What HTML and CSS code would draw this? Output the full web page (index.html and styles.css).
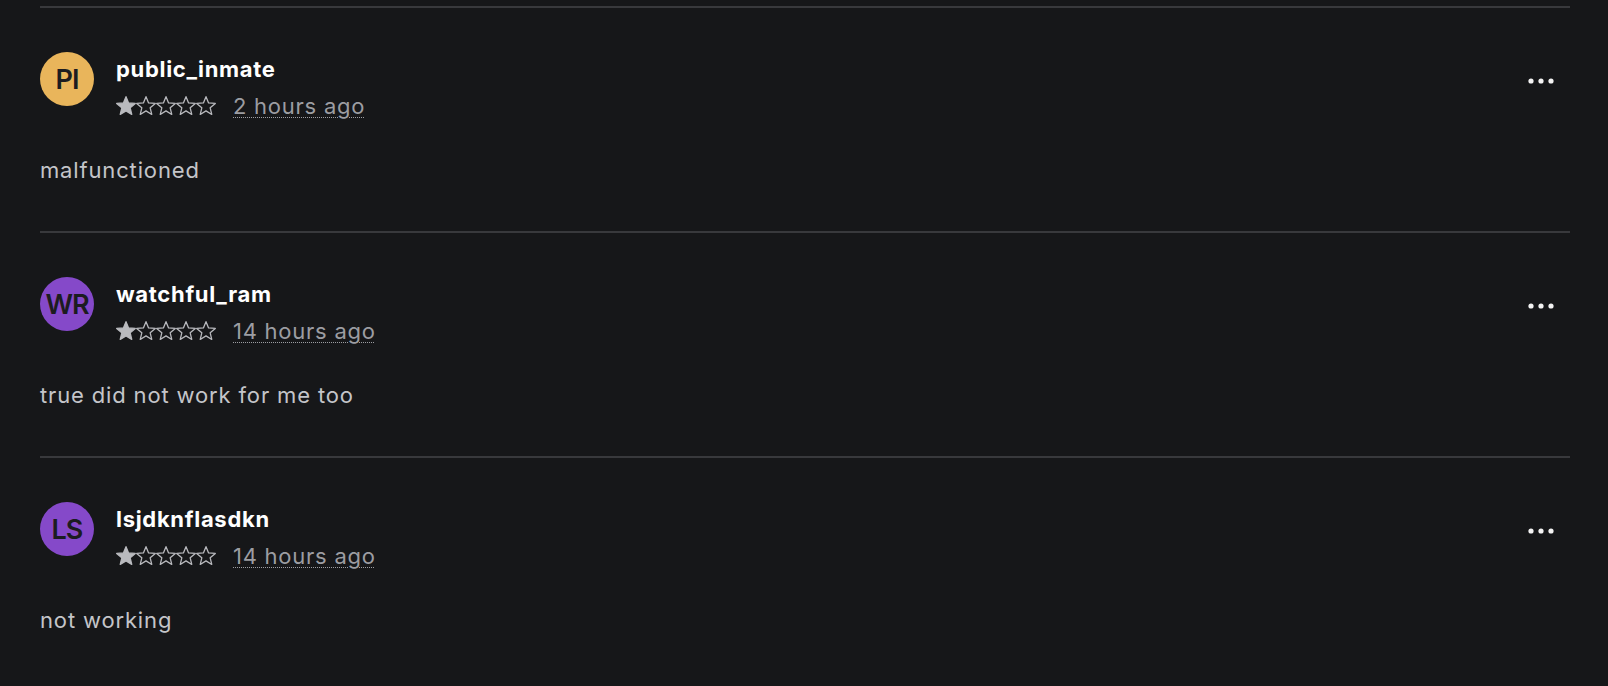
FILE: index.html
```html
<!DOCTYPE html>
<html lang="en">
<head>
    <meta charset="UTF-8">
    <meta name="viewport" content="width=device-width, initial-scale=1.0">
    <title>Reviews</title>
    <link rel="stylesheet" href="styles.css">
</head>
<body>
    <div class="review-list">

        <!-- Review 1 -->
        <div class="review">
            <div class="review-head">
                <div class="avatar avatar-yellow">PI</div>
                <div class="review-meta">
                    <div class="username">public_inmate</div>
                    <div class="meta-line">
                        <div class="stars">
                            <svg class="star filled" viewBox="0 0 20 20"><path d="M10 .7l2.59 6.24 6.73.53-5.14 4.39 1.58 6.57L10 14.9l-5.76 3.53 1.58-6.57L.68 7.47l6.73-.53z"/></svg>
                            <svg class="star" viewBox="0 0 20 20"><path d="M10 .7l2.59 6.24 6.73.53-5.14 4.39 1.58 6.57L10 14.9l-5.76 3.53 1.58-6.57L.68 7.47l6.73-.53z"/></svg>
                            <svg class="star" viewBox="0 0 20 20"><path d="M10 .7l2.59 6.24 6.73.53-5.14 4.39 1.58 6.57L10 14.9l-5.76 3.53 1.58-6.57L.68 7.47l6.73-.53z"/></svg>
                            <svg class="star" viewBox="0 0 20 20"><path d="M10 .7l2.59 6.24 6.73.53-5.14 4.39 1.58 6.57L10 14.9l-5.76 3.53 1.58-6.57L.68 7.47l6.73-.53z"/></svg>
                            <svg class="star" viewBox="0 0 20 20"><path d="M10 .7l2.59 6.24 6.73.53-5.14 4.39 1.58 6.57L10 14.9l-5.76 3.53 1.58-6.57L.68 7.47l6.73-.53z"/></svg>
                        </div>
                        <span class="time">2 hours ago</span>
                    </div>
                </div>
                <button class="more" aria-label="More">
                    <svg viewBox="0 0 30 10"><circle cx="5" cy="5" r="2.6"/><circle cx="15" cy="5" r="2.6"/><circle cx="25" cy="5" r="2.6"/></svg>
                </button>
            </div>
            <p class="review-body">malfunctioned</p>
        </div>

        <!-- Review 2 -->
        <div class="review">
            <div class="review-head">
                <div class="avatar avatar-purple">WR</div>
                <div class="review-meta">
                    <div class="username">watchful_ram</div>
                    <div class="meta-line">
                        <div class="stars">
                            <svg class="star filled" viewBox="0 0 20 20"><path d="M10 .7l2.59 6.24 6.73.53-5.14 4.39 1.58 6.57L10 14.9l-5.76 3.53 1.58-6.57L.68 7.47l6.73-.53z"/></svg>
                            <svg class="star" viewBox="0 0 20 20"><path d="M10 .7l2.59 6.24 6.73.53-5.14 4.39 1.58 6.57L10 14.9l-5.76 3.53 1.58-6.57L.68 7.47l6.73-.53z"/></svg>
                            <svg class="star" viewBox="0 0 20 20"><path d="M10 .7l2.59 6.24 6.73.53-5.14 4.39 1.58 6.57L10 14.9l-5.76 3.53 1.58-6.57L.68 7.47l6.73-.53z"/></svg>
                            <svg class="star" viewBox="0 0 20 20"><path d="M10 .7l2.59 6.24 6.73.53-5.14 4.39 1.58 6.57L10 14.9l-5.76 3.53 1.58-6.57L.68 7.47l6.73-.53z"/></svg>
                            <svg class="star" viewBox="0 0 20 20"><path d="M10 .7l2.59 6.24 6.73.53-5.14 4.39 1.58 6.57L10 14.9l-5.76 3.53 1.58-6.57L.68 7.47l6.73-.53z"/></svg>
                        </div>
                        <span class="time">14 hours ago</span>
                    </div>
                </div>
                <button class="more" aria-label="More">
                    <svg viewBox="0 0 30 10"><circle cx="5" cy="5" r="2.6"/><circle cx="15" cy="5" r="2.6"/><circle cx="25" cy="5" r="2.6"/></svg>
                </button>
            </div>
            <p class="review-body">true did not work for me too</p>
        </div>

        <!-- Review 3 -->
        <div class="review">
            <div class="review-head">
                <div class="avatar avatar-purple">LS</div>
                <div class="review-meta">
                    <div class="username">lsjdknflasdkn</div>
                    <div class="meta-line">
                        <div class="stars">
                            <svg class="star filled" viewBox="0 0 20 20"><path d="M10 .7l2.59 6.24 6.73.53-5.14 4.39 1.58 6.57L10 14.9l-5.76 3.53 1.58-6.57L.68 7.47l6.73-.53z"/></svg>
                            <svg class="star" viewBox="0 0 20 20"><path d="M10 .7l2.59 6.24 6.73.53-5.14 4.39 1.58 6.57L10 14.9l-5.76 3.53 1.58-6.57L.68 7.47l6.73-.53z"/></svg>
                            <svg class="star" viewBox="0 0 20 20"><path d="M10 .7l2.59 6.24 6.73.53-5.14 4.39 1.58 6.57L10 14.9l-5.76 3.53 1.58-6.57L.68 7.47l6.73-.53z"/></svg>
                            <svg class="star" viewBox="0 0 20 20"><path d="M10 .7l2.59 6.24 6.73.53-5.14 4.39 1.58 6.57L10 14.9l-5.76 3.53 1.58-6.57L.68 7.47l6.73-.53z"/></svg>
                            <svg class="star" viewBox="0 0 20 20"><path d="M10 .7l2.59 6.24 6.73.53-5.14 4.39 1.58 6.57L10 14.9l-5.76 3.53 1.58-6.57L.68 7.47l6.73-.53z"/></svg>
                        </div>
                        <span class="time">14 hours ago</span>
                    </div>
                </div>
                <button class="more" aria-label="More">
                    <svg viewBox="0 0 30 10"><circle cx="5" cy="5" r="2.6"/><circle cx="15" cy="5" r="2.6"/><circle cx="25" cy="5" r="2.6"/></svg>
                </button>
            </div>
            <p class="review-body">not working</p>
        </div>

    </div>
</body>
</html>
```

FILE: styles.css
```css
/* Reset and dark page */
body {
    margin: 0;
    padding: 0;
    background-color: #161719;
    font-family: Inter, "Noto Sans", sans-serif;
    color: #c4c5c9;
}

/* List of reviews */
.review-list {
    padding: 6px 38px 0 40px;
}

.review {
    border-top: 2px solid #38393c;
    padding: 44px 0 45px;
}

/* Avatar, name, rating and menu */
.review-head {
    display: flex;
    align-items: flex-start;
}

.avatar {
    flex: none;
    width: 54px;
    height: 54px;
    border-radius: 50%;
    display: flex;
    align-items: center;
    justify-content: center;
    font-size: 27px;
    font-weight: 600;
    letter-spacing: -1px;
    color: #1c1c20;
}

.avatar-yellow {
    background-color: #e9b55b;
}

.avatar-purple {
    background-color: #8549c9;
}

.review-meta {
    flex: 1;
    margin-left: 22px;
    padding-top: 3px;
}

.username {
    font-size: 22px;
    font-weight: 700;
    line-height: 28px;
    letter-spacing: 0.7px;
    color: #ffffff;
}

.meta-line {
    display: flex;
    align-items: center;
    margin-top: 8px;
}

.stars {
    display: flex;
}

.star {
    width: 20px;
    height: 20px;
    fill: none;
    stroke: #b9babe;
    stroke-width: 1.3;
    stroke-linejoin: round;
}

.star.filled {
    fill: #b9babe;
}

.time {
    margin-left: 17px;
    font-size: 22px;
    line-height: 30px;
    letter-spacing: 0.75px;
    color: #9c9da2;
    text-decoration: underline dotted #9c9da2;
    text-decoration-thickness: 1px;
    text-underline-offset: 3px;
}

/* Three dots menu button */
.more {
    flex: none;
    background: transparent;
    border: none;
    padding: 0;
    margin: 24px 14px 0 0;
    width: 30px;
    height: 10px;
    display: flex;
}

.more svg {
    width: 30px;
    height: 10px;
    fill: #f2f2f2;
}

/* Review text */
.review-body {
    margin: 33px 0 0;
    font-size: 22px;
    line-height: 32px;
    letter-spacing: 0.85px;
}
```
